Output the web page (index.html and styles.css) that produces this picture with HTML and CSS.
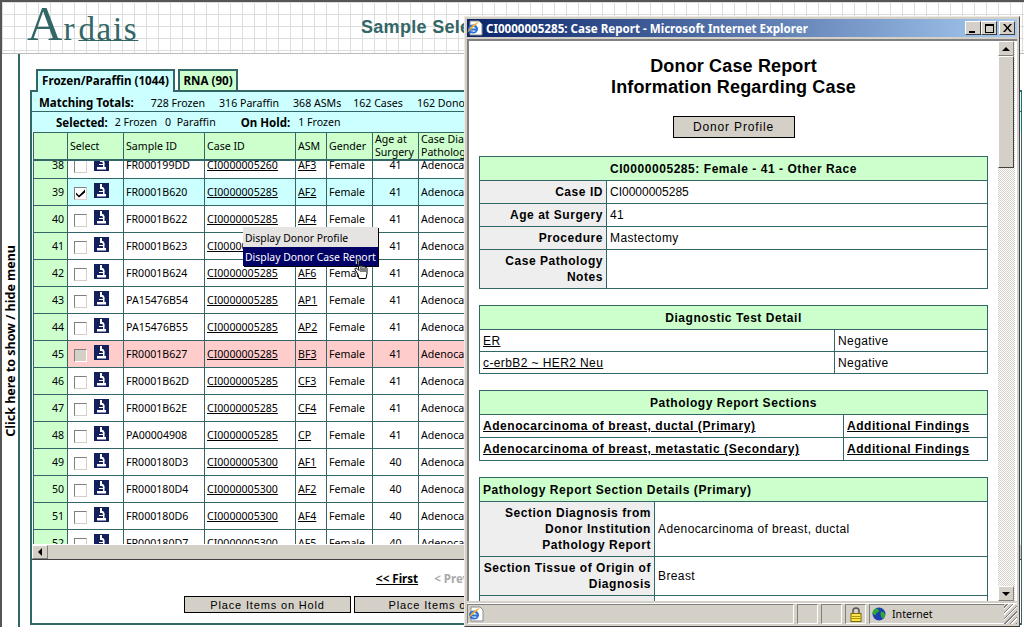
FILE: index.html
```html
<!DOCTYPE html>
<html lang="en">
<head>
  <meta charset="UTF-8" />
  <title>Sample Selection</title>
  <link rel="stylesheet" href="styles.css">
</head>
<body>
  <svg class="defs" width="0" height="0">
    <symbol id="scope" viewBox="0 0 15 15">
      <rect width="15" height="15" fill="#14205c"/>
      <path d="M6 1h2v5h-2z M8 4h1c1.500 1 2 3 1.500 5v2h-1.500v-2c0-2-.5-3-1.500-4z M5 8h4v1h-4z M3 11h9v2.500h-9z" fill="#fff"/>
    </symbol>
    <symbol id="ie" viewBox="0 0 16 16">
      <path d="M3 1h9l3 3v11h-12z" fill="#fff" stroke="#8a8a8a"/>
      <ellipse cx="6" cy="9" rx="5" ry="4.500" fill="#2a6fd6"/>
      <path d="M3 8.500c1-2 5-2 6 0z M3.500 10.500c1.500 1.500 4 1.500 5.500 .5l-1.500-.5z" fill="#fff"/>
      <path d="M0 13c2-5 7-10 12-11-3 3-8 7-12 11z" fill="#f0b030"/>
    </symbol>
  </svg>

  <div class="page">
    <header class="banner">
      <div class="logo"><span class="logo-a">A</span><span class="logo-r">r</span><span class="logo-rest">dais</span></div>
      <h1 class="page-title">Sample Selection</h1>
    </header>

    <div class="main">
      <div class="menu-toggle"><span>Click here to show / hide menu</span></div>

      <div class="content">
        <div class="tabs">
          <div class="tab tab-active">Frozen/Paraffin (1044)</div>
          <div class="tab tab-rna">RNA (90)</div>
        </div>

        <div class="panel">
          <div class="totals">
            <b>Matching Totals:</b>
            <span class="t1">728 Frozen</span>
            <span class="t2">316 Paraffin</span>
            <span class="t3">368 ASMs</span>
            <span class="t4">162 Cases</span>
            <span class="t5">162 Donors</span>
          </div>
          <div class="selected">
            <b>Selected:</b>
            <span class="s1">2 Frozen</span>
            <span class="s2">0&nbsp; Paraffin</span>
            <b class="s3">On Hold:</b>
            <span class="s4">1 Frozen</span>
          </div>

          <table class="grid grid-head">
            <colgroup><col class="c-num"><col class="c-sel"><col class="c-sample"><col class="c-case"><col class="c-asm"><col class="c-gender"><col class="c-age"><col class="c-diag"></colgroup>
            <tr>
              <th></th>
              <th>Select</th>
              <th>Sample ID</th>
              <th>Case ID</th>
              <th>ASM</th>
              <th>Gender</th>
              <th>Age at<br>Surgery</th>
              <th>Case Diagnosis /<br>Pathology</th>
            </tr>
          </table>

          <div class="grid-body">
            <table class="grid">
              <colgroup><col class="c-num"><col class="c-sel"><col class="c-sample"><col class="c-case"><col class="c-asm"><col class="c-gender"><col class="c-age"><col class="c-diag"></colgroup>
              <tr><td class="num">38</td><td class="sel"><span class="chk"></span><svg class="scope"><use href="#scope"/></svg></td><td>FR000199DD</td><td><a href="#">CI0000005260</a></td><td><a href="#">AF3</a></td><td>Female</td><td class="age">41</td><td>Adenocarcinoma</td></tr>
              <tr class="row-on"><td class="num">39</td><td class="sel"><span class="chk"><svg class="tick" viewBox="0 0 9 9"><path d="M0 3.500l3 3 6-6v3l-6 5-3-3z" fill="#000"/></svg></span><svg class="scope"><use href="#scope"/></svg></td><td>FR0001B620</td><td><a href="#">CI0000005285</a></td><td><a href="#">AF2</a></td><td>Female</td><td class="age">41</td><td>Adenocarcinoma</td></tr>
              <tr><td class="num">40</td><td class="sel"><span class="chk"></span><svg class="scope"><use href="#scope"/></svg></td><td>FR0001B622</td><td><a href="#">CI0000005285</a></td><td><a href="#">AF4</a></td><td>Female</td><td class="age">41</td><td>Adenocarcinoma</td></tr>
              <tr><td class="num">41</td><td class="sel"><span class="chk"></span><svg class="scope"><use href="#scope"/></svg></td><td>FR0001B623</td><td><a href="#">CI0000005285</a></td><td><a href="#">AF5</a></td><td>Female</td><td class="age">41</td><td>Adenocarcinoma</td></tr>
              <tr><td class="num">42</td><td class="sel"><span class="chk"></span><svg class="scope"><use href="#scope"/></svg></td><td>FR0001B624</td><td><a href="#">CI0000005285</a></td><td><a href="#">AF6</a></td><td>Female</td><td class="age">41</td><td>Adenocarcinoma</td></tr>
              <tr><td class="num">43</td><td class="sel"><span class="chk"></span><svg class="scope"><use href="#scope"/></svg></td><td>PA15476B54</td><td><a href="#">CI0000005285</a></td><td><a href="#">AP1</a></td><td>Female</td><td class="age">41</td><td>Adenocarcinoma</td></tr>
              <tr><td class="num">44</td><td class="sel"><span class="chk"></span><svg class="scope"><use href="#scope"/></svg></td><td>PA15476B55</td><td><a href="#">CI0000005285</a></td><td><a href="#">AP2</a></td><td>Female</td><td class="age">41</td><td>Adenocarcinoma</td></tr>
              <tr class="row-hold"><td class="num">45</td><td class="sel"><span class="chk chk-off"></span><svg class="scope"><use href="#scope"/></svg></td><td>FR0001B627</td><td><a href="#">CI0000005285</a></td><td><a href="#">BF3</a></td><td>Female</td><td class="age">41</td><td>Adenocarcinoma</td></tr>
              <tr><td class="num">46</td><td class="sel"><span class="chk"></span><svg class="scope"><use href="#scope"/></svg></td><td>FR0001B62D</td><td><a href="#">CI0000005285</a></td><td><a href="#">CF3</a></td><td>Female</td><td class="age">41</td><td>Adenocarcinoma</td></tr>
              <tr><td class="num">47</td><td class="sel"><span class="chk"></span><svg class="scope"><use href="#scope"/></svg></td><td>FR0001B62E</td><td><a href="#">CI0000005285</a></td><td><a href="#">CF4</a></td><td>Female</td><td class="age">41</td><td>Adenocarcinoma</td></tr>
              <tr><td class="num">48</td><td class="sel"><span class="chk"></span><svg class="scope"><use href="#scope"/></svg></td><td>PA00004908</td><td><a href="#">CI0000005285</a></td><td><a href="#">CP</a></td><td>Female</td><td class="age">41</td><td>Adenocarcinoma</td></tr>
              <tr><td class="num">49</td><td class="sel"><span class="chk"></span><svg class="scope"><use href="#scope"/></svg></td><td>FR000180D3</td><td><a href="#">CI0000005300</a></td><td><a href="#">AF1</a></td><td>Female</td><td class="age">40</td><td>Adenocarcinoma</td></tr>
              <tr><td class="num">50</td><td class="sel"><span class="chk"></span><svg class="scope"><use href="#scope"/></svg></td><td>FR000180D4</td><td><a href="#">CI0000005300</a></td><td><a href="#">AF2</a></td><td>Female</td><td class="age">40</td><td>Adenocarcinoma</td></tr>
              <tr><td class="num">51</td><td class="sel"><span class="chk"></span><svg class="scope"><use href="#scope"/></svg></td><td>FR000180D6</td><td><a href="#">CI0000005300</a></td><td><a href="#">AF4</a></td><td>Female</td><td class="age">40</td><td>Adenocarcinoma</td></tr>
              <tr><td class="num">52</td><td class="sel"><span class="chk"></span><svg class="scope"><use href="#scope"/></svg></td><td>FR000180D7</td><td><a href="#">CI0000005300</a></td><td><a href="#">AF5</a></td><td>Female</td><td class="age">40</td><td>Adenocarcinoma</td></tr>
            </table>
          </div>

          <div class="hscroll">
            <span class="sb-btn"><i class="arrow-left"></i></span>
          </div>

          <div class="grid-foot">
            <div class="pager"><a href="#">&lt;&lt; First</a><span class="pager-off">&lt; Prev</span></div>
            <div class="actions">
              <button class="btn btn-hold">Place Items on Hold</button>
              <button class="btn btn-order">Place Items on Order</button>
            </div>
          </div>
        </div>
      </div>
    </div>
  </div>

  <!-- right click menu -->
  <div class="ctx-menu">
    <div class="ctx-item">Display Donor Profile</div>
    <div class="ctx-item ctx-on">Display Donor Case Report</div>
  </div>
  <svg class="hand" viewBox="0 0 14 22">
    <path d="M3 1.500c0-1 2-1 2 0v7c0-1 2-1 2 0 0-1 2-1 2 .5 0-1 2-1 2 .5 0-.5 2-.5 2 1v5l-1 5h-7l-1-4-3-5c-.5-1 1-2 2-1l2 2z" fill="#fff" stroke="#000"/>
    <path d="M7 9v5M9 9.500v4.500M11 10v4" stroke="#000" fill="none"/>
  </svg>

  <!-- popup window -->
  <div class="popup">
    <div class="titlebar">
      <svg class="title-icon"><use href="#ie"/></svg>
      <span class="title-text">CI0000005285: Case Report - Microsoft Internet Explorer</span>
      <span class="win-btn win-min"><i></i></span>
      <span class="win-btn win-max"><i></i></span>
      <span class="win-btn win-close">
        <svg viewBox="0 0 9 8" width="9" height="8"><path d="M0 0h2l2.500 3 2.500-3h2l-3.500 4 3.500 4h-2l-2.500-3-2.500 3h-2l3.500-4z" fill="#000"/></svg>
      </span>
    </div>

    <div class="client">
      <div class="doc">
        <h2 class="doc-title">Donor Case Report<br>Information Regarding Case</h2>
        <div class="doc-action"><button class="btn btn-profile">Donor Profile</button></div>

        <table class="report">
          <colgroup><col class="r-case"><col></colgroup>
          <tr><th colspan="2">CI0000005285: Female - 41 - Other Race</th></tr>
          <tr><td class="lab">Case ID</td><td class="tight">CI0000005285</td></tr>
          <tr><td class="lab">Age at Surgery</td><td>41</td></tr>
          <tr><td class="lab">Procedure</td><td>Mastectomy</td></tr>
          <tr><td class="lab">Case Pathology Notes</td><td></td></tr>
        </table>

        <table class="report report-test">
          <colgroup><col class="r-test"><col></colgroup>
          <tr><th colspan="2">Diagnostic Test Detail</th></tr>
          <tr><td><a href="#">ER</a></td><td>Negative</td></tr>
          <tr><td><a href="#">c-erbB2 ~ HER2 Neu</a></td><td>Negative</td></tr>
        </table>

        <table class="report report-path">
          <colgroup><col class="r-path"><col></colgroup>
          <tr><th colspan="2">Pathology Report Sections</th></tr>
          <tr><td><a href="#">Adenocarcinoma of breast, ductal (Primary)</a></td><td><a href="#">Additional Findings</a></td></tr>
          <tr><td><a href="#">Adenocarcinoma of breast, metastatic (Secondary)</a></td><td><a href="#">Additional Findings</a></td></tr>
        </table>

        <table class="report report-detail">
          <colgroup><col class="r-detail"><col></colgroup>
          <tr><th colspan="2">Pathology Report Section Details (Primary)</th></tr>
          <tr><td class="lab">Section Diagnosis from Donor Institution Pathology Report</td><td>Adenocarcinoma of breast, ductal</td></tr>
          <tr><td class="lab">Section Tissue of Origin of Diagnosis</td><td>Breast</td></tr>
          <tr><td class="lab">Section Lymph Nodes</td><td></td></tr>
        </table>
      </div>

      <div class="vscroll">
        <span class="sb-btn sb-v"><i class="arrow-up"></i></span>
        <span class="sb-thumb"></span>
        <span class="sb-track"></span>
        <span class="sb-btn sb-v"><i class="arrow-down"></i></span>
      </div>
    </div>

    <div class="statusbar">
      <span class="st-pane st-main"><svg class="title-icon"><use href="#ie"/></svg></span>
      <span class="st-pane st-small"></span>
      <span class="st-pane st-small"></span>
      <span class="st-pane st-lock">
        <svg width="12" height="15" viewBox="0 0 12 15"><path d="M3 7v-3a3 3 0 0 1 6 0v3" fill="none" stroke="#555" stroke-width="1.500"/><rect x="1" y="6.500" width="10" height="8" fill="#ffe44d" stroke="#7a6a00"/><path d="M2 9.500h8M2 11.500h8" stroke="#b09a00"/></svg>
      </span>
      <span class="st-pane st-zone">
        <svg width="14" height="14" viewBox="0 0 14 14"><circle cx="7" cy="7" r="6.500" fill="#1c3fb0"/><path d="M3 2c2-1 4 0 4 2s-3 1-3 3-2 1-3 0 0-4 2-5z M9 5c2-1 4 1 4 3s-2 4-3 3-2-5-1-6z" fill="#2fa82f"/></svg>
        Internet
      </span>
      <span class="st-grip"></span>
    </div>
  </div>
</body>
</html>
```

FILE: styles.css
```css
* {
  box-sizing: border-box;
}
html, body {
  margin: 0;
  height: 100%;
  overflow: hidden;
}
body {
  font-family: "Noto Sans", Arial, sans-serif;
  font-size: 10.6px;
  color: #000;
  background: #fff;
}
b {
  font-size: 11.5px;
}
a {
  color: #000;
}
.defs {
  display: block;
  height: 0;
}

/* page frame */
.page {
  display: flex;
  flex-direction: column;
  height: 627px;
  border-top: 2px solid #555;
  border-left: 2px solid #555;
}
.banner {
  display: flex;
  align-items: flex-start;
  height: 52px;
  padding-left: 25px;
  border-bottom: 1px solid #bbb;
  background-color: #fff;
  background-image:
    linear-gradient(#ddd 1px, transparent 1px),
    linear-gradient(90deg, #ddd 1px, transparent 1px);
  background-size: 12px 12px;
}
.logo {
  display: flex;
  align-items: baseline;
  width: 111px;
  height: 44px;
  font-family: "Liberation Serif", serif;
  color: #336666;
}
.logo-a {
  font-size: 49px;
  line-height: 44px;
}
.logo-r {
  font-size: 33px;
  margin-left: 1px;
}
.logo-rest {
  margin-left: 4px;
  font-size: 33px;
  letter-spacing: 1.7px;
  text-decoration: underline 1px;
  text-underline-offset: 0;
}
.page-title {
  margin: 15px 0 0 223px;
  font-family: "Liberation Sans", Arial, sans-serif;
  font-size: 18px;
  letter-spacing: 0.3px;
  color: #336666;
  white-space: nowrap;
}
.main {
  display: flex;
  flex: 1;
  min-height: 0;
}
.menu-toggle {
  display: flex;
  align-items: center;
  justify-content: center;
  width: 18px;
  border-right: 2px solid #336666;
}
.menu-toggle span {
  writing-mode: vertical-rl;
  transform: rotate(180deg);
  font-size: 12.5px;
  font-weight: bold;
  white-space: nowrap;
}
.content {
  flex: 1;
  min-width: 0;
  padding: 15px 2px 2px 10px;
  display: flex;
  flex-direction: column;
}

/* tabs */
.tabs {
  display: flex;
  gap: 3px;
  height: 21px;
  margin-left: 6px;
}
.tab {
  width: 139px;
  height: 21px;
  padding-top: 2px;
  border: 2px solid #336666;
  border-bottom: 0;
  background: #ccffcc;
  font-size: 11.6px;
  font-weight: bold;
  text-align: center;
  white-space: nowrap;
}
.tab-rna {
  width: 60px;
}
.tab-active {
  position: relative;
  z-index: 1;
  height: 23px;
  background: #ccffff;
}

/* main panel */
.panel {
  flex: 1;
  min-height: 0;
  display: flex;
  flex-direction: column;
  border: 2px solid #336666;
  border-right-width: 1px;
  overflow: hidden;
}
.totals, .selected {
  display: flex;
  align-items: center;
  background: #ccffff;
  white-space: nowrap;
}
.totals {
  height: 20px;
  padding: 2px 0 0 7px;
  border-bottom: 1px solid #336666;
}
.selected {
  height: 20px;
  padding-left: 24px;
}
.t1 { margin-left: 17px; }
.t2, .t3, .t5 { margin-left: 14px; }
.t4 { margin-left: 12px; }
.s1 { margin-left: 7px; }
.s2 { margin-left: 8px; }
.s3 { margin-left: 25px; }
.s4 { margin-left: 8px; }

/* sample grid */
.grid {
  width: 986px;
  margin-left: 1px;
  table-layout: fixed;
  border-collapse: collapse;
}
.c-num { width: 34px; }
.c-sel { width: 56px; }
.c-sample { width: 81px; }
.c-case { width: 91px; }
.c-asm { width: 31px; }
.c-gender { width: 46px; }
.c-age { width: 46px; }
.c-diag { width: 601px; }
.grid th, .grid td {
  border: 1px solid #336666;
  padding: 0 2px;
  font-weight: normal;
  text-align: left;
  white-space: nowrap;
  overflow: hidden;
}
.grid th {
  height: 27px;
  line-height: 13px;
  background: #ccffcc;
}
.grid-head {
  border-bottom: 2px solid #336666;
}
.grid-body {
  flex: none;
  height: 383px;
  overflow: hidden;
}
.grid-body .grid {
  margin-top: -10px;
}
.grid td {
  height: 27px;
  padding-bottom: 1px;
  background: #fff;
}
.grid .num {
  padding-right: 3px;
  text-align: right;
  background: #ccffcc;
}
.grid .age {
  text-align: center;
}
.grid .sel {
  padding: 0;
  line-height: 0;
  vertical-align: top;
}
.row-on td {
  background: #ccffff;
}
.row-hold td {
  background: #ffcccc;
}
.chk {
  display: inline-block;
  width: 13px;
  height: 13px;
  margin: 8px 7px 0 6px;
  border: 1px solid;
  border-color: #808080 #d4d0c8 #d4d0c8 #808080;
  background: #fff;
  vertical-align: top;
}
.chk-off {
  background: #d4d0c8;
  border-color: #808080 #fff #fff #808080;
}
.tick {
  display: block;
  width: 9px;
  height: 9px;
  margin: 1px;
}
.scope {
  display: inline-block;
  width: 15px;
  height: 15px;
  margin-top: 4px;
  vertical-align: top;
}

/* scrollbars */
.hscroll {
  flex: none;
  height: 16px;
  background: #d4d0c8;
  border-top: 1px solid #fff;
  border-bottom: 1px solid #404040;
}
.sb-btn {
  display: flex;
  align-items: center;
  justify-content: center;
  width: 16px;
  height: 14px;
  background: #d4d0c8;
  border: 1px solid;
  border-color: #fff #808080 #808080 #fff;
}
.arrow-left {
  border-top: 4px solid transparent;
  border-bottom: 4px solid transparent;
  border-right: 4px solid #000;
}
.arrow-up {
  border-left: 4px solid transparent;
  border-right: 4px solid transparent;
  border-bottom: 4px solid #000;
}
.arrow-down {
  border-left: 4px solid transparent;
  border-right: 4px solid transparent;
  border-top: 4px solid #000;
}
.grid-foot {
  flex: 1;
  background: #fff;
}
.pager {
  padding: 11px 0 0 344px;
  font-size: 11.6px;
  font-weight: bold;
  white-space: nowrap;
}
.pager-off {
  margin-left: 16px;
  color: #aaa;
}
.actions {
  display: flex;
  gap: 3px;
  margin-top: 10px;
  padding-left: 152px;
}
.btn {
  height: 17px;
  padding: 0;
  border: 1px solid #000;
  background: #d4d0c8;
  font-family: "Liberation Sans", Arial, sans-serif;
  font-size: 11px;
  letter-spacing: 0.85px;
  color: #000;
  white-space: nowrap;
}
.btn-hold { width: 167px; }
.btn-order { width: 190px; }

/* context menu */
.ctx-menu {
  position: absolute;
  left: 243px;
  top: 227px;
  width: 135px;
  padding-top: 1px;
  background: #e6e3e3;
  box-shadow: 1px 1px 0 #000;
  font-size: 10.4px;
}
.ctx-item {
  height: 19px;
  padding: 3px 0 0 2px;
  white-space: nowrap;
}
.ctx-on {
  background: #000066;
  color: #fff;
}
.hand {
  position: absolute;
  left: 354px;
  top: 258px;
  width: 14px;
  height: 22px;
}

/* popup window */
.popup {
  position: absolute;
  left: 464px;
  top: 16px;
  width: 556px;
  height: 611px;
  display: flex;
  flex-direction: column;
  padding: 2px;
  background: #d4d0c8;
  border: 1px solid;
  border-color: #ece9e2 #404040 #404040 #ece9e2;
}
.titlebar {
  flex: none;
  display: flex;
  align-items: center;
  height: 18px;
  padding-right: 2px;
  background: linear-gradient(90deg, #0a246a, #a6caf0);
}
.title-icon {
  flex: none;
  width: 16px;
  height: 16px;
}
.title-text {
  flex: 1;
  margin-left: 3px;
  font-size: 11.6px;
  font-weight: bold;
  color: #fff;
  white-space: nowrap;
}
.win-btn {
  display: flex;
  align-items: center;
  justify-content: center;
  width: 16px;
  height: 14px;
  background: #d4d0c8;
  border: 1px solid;
  border-color: #fff #404040 #404040 #fff;
}
.win-min i {
  width: 6px;
  height: 2px;
  margin-top: 7px;
  margin-right: 2px;
  background: #000;
}
.win-max i {
  width: 9px;
  height: 9px;
  border: 1px solid #000;
  border-top-width: 2px;
}
.win-close {
  margin-left: 2px;
}
.client {
  flex: 1;
  min-height: 0;
  display: flex;
  margin-top: 2px;
  border-top: 2px solid #808080;
  border-left: 2px solid #808080;
  background: #fff;
}
.doc {
  flex: 1;
  min-width: 0;
  overflow: hidden;
  padding: 0 10px 0 10px;
  font-family: "Liberation Sans", Arial, sans-serif;
  font-size: 12px;
  letter-spacing: 0.4px;
}
.doc-title {
  margin: 15px 0 0;
  font-size: 18px;
  line-height: 21px;
  text-align: center;
  letter-spacing: 0.15px;
}
.doc-action {
  margin: 18px 0 18px;
  text-align: center;
}
.btn-profile {
  width: 122px;
  height: 22px;
  font-size: 12px;
}
.report {
  width: 509px;
  margin-bottom: 16px;
  table-layout: fixed;
  border-collapse: collapse;
  border: 1px solid #336666;
}
.report th {
  height: 24px;
  background: #ccffcc;
  border: 1px solid #336666;
  letter-spacing: 0.55px;
}
.report td {
  height: 23px;
  padding: 3px;
  border: 1px solid #336666;
  line-height: 16px;
}
.report-test td {
  height: 22px;
  padding: 2px 3px;
}
.report .lab {
  background: #eeeeee;
  font-weight: bold;
  letter-spacing: 0.55px;
  text-align: right;
}
.report .tight {
  letter-spacing: 0;
}
.r-case { width: 127px; }
.r-test { width: 355px; }
.r-path { width: 364px; }
.r-detail { width: 175px; }
.report-path td {
  font-weight: bold;
  letter-spacing: 0.55px;
}
.report-detail th {
  padding-left: 3px;
  text-align: left;
}
.vscroll {
  flex: none;
  display: flex;
  flex-direction: column;
  width: 17px;
  margin-right: 2px;
  background: repeating-conic-gradient(#d4d0c8 0 25%, #fff 0 50%) 0 0 / 2px 2px;
}
.sb-v {
  flex: none;
  width: 16px;
  height: 15px;
}
.sb-thumb {
  flex: none;
  height: 112px;
  background: #d4d0c8;
  border: 1px solid;
  border-color: #fff #404040 #404040 #fff;
  width: 16px;
}
.sb-track {
  flex: 1;
}

/* status bar */
.statusbar {
  flex: none;
  display: flex;
  gap: 3px;
  height: 21px;
  margin-top: 2px;
  border-top: 1px solid #fff;
  font-size: 10.6px;
}
.st-pane {
  display: flex;
  align-items: center;
  gap: 6px;
  border: 1px solid;
  border-color: #808080 #fff #fff #808080;
}
.st-main {
  flex: 1;
}
.st-small {
  width: 21px;
}
.st-lock {
  justify-content: center;
  width: 21px;
}
.st-zone {
  width: 148px;
  padding-left: 2px;
}
.st-grip {
  width: 13px;
  margin-left: -16px;
  background: repeating-linear-gradient(135deg, #d4d0c8 0 2px, #808080 2px 3px, #fff 3px 4px);
}
```
